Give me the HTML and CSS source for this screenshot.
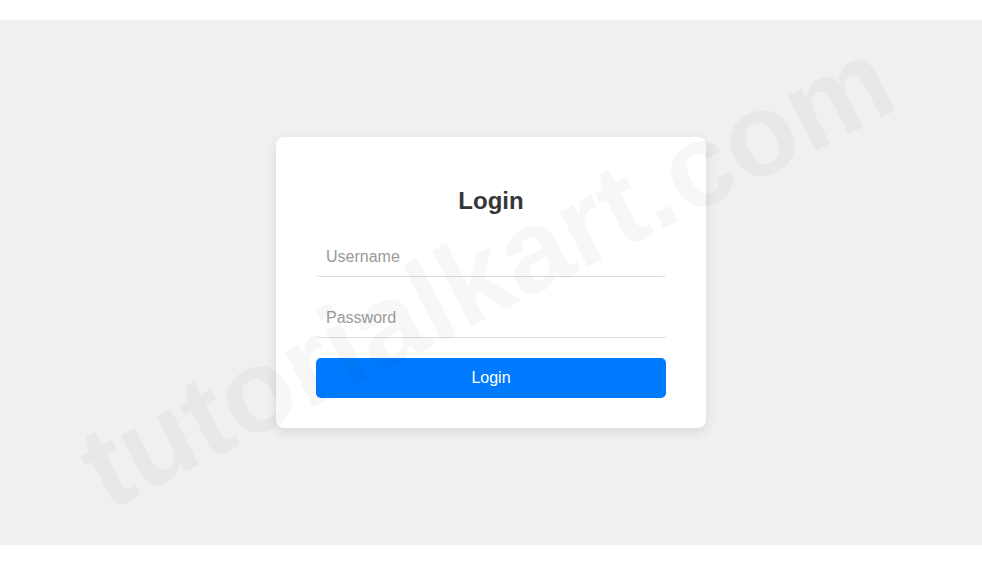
FILE: index.html
```html
<!DOCTYPE html>
<html lang="en">
<head>
<meta charset="utf-8">
<title>Login</title>
<link rel="stylesheet" href="styles.css">
</head>
<body>
<div class="page">
  <section class="stage">
    <form class="card">
      <h2 class="title">Login</h2>
      <input class="field" type="text" placeholder="Username">
      <input class="field" type="password" placeholder="Password">
      <button class="btn" type="button">Login</button>
    </form>
    <div class="watermark">tutorialkart.com</div>
  </section>
</div>
</body>
</html>
```
FILE: styles.css
```css
html, body {
  margin: 0;
  padding: 0;
  background: #ffffff;
}
body {
  font-family: "Liberation Sans", Arial, sans-serif;
}
.page {
  padding-top: 20px;
}
.stage {
  position: relative;
  height: 525px;
  background: #f0f0f0;
  display: flex;
  align-items: center;
  justify-content: center;
}
.card {
  box-sizing: border-box;
  width: 430px;
  padding: 30px 40px;
  background: #ffffff;
  border-radius: 8px;
  box-shadow: 0 4px 12px rgba(0, 0, 0, 0.1);
  display: flex;
  flex-direction: column;
}
.title {
  margin: 20px 0 22px;
  font-size: 24px;
  line-height: 28px;
  font-weight: bold;
  color: #363636;
  text-align: center;
}
.field {
  box-sizing: border-box;
  display: block;
  width: 100%;
  height: 40px;
  margin: 0 0 21px;
  padding: 0 10px;
  border: none;
  border-bottom: 1px solid #dddddd;
  border-radius: 4px;
  background: transparent;
  font-family: "Liberation Sans", Arial, sans-serif;
  font-size: 16px;
  color: #333333;
  outline: none;
}
.field:last-of-type {
  margin-bottom: 20px;
}
.field::placeholder {
  color: #9a9a9a;
}
.btn {
  box-sizing: border-box;
  width: 100%;
  height: 40px;
  border: none;
  border-radius: 5px;
  background: #007bff;
  color: #ffffff;
  font-family: "Liberation Sans", Arial, sans-serif;
  font-size: 16px;
  cursor: pointer;
}
.watermark {
  position: absolute;
  left: calc(50% - 5px);
  top: calc(50% - 10px);
  transform: translate(-50%, -50%) rotate(-27deg);
  font-family: "Liberation Sans", Arial, sans-serif;
  font-weight: bold;
  font-size: 118px;
  line-height: 1;
  white-space: nowrap;
  color: rgba(0, 0, 0, 0.03);
  pointer-events: none;
  user-select: none;
}
```
